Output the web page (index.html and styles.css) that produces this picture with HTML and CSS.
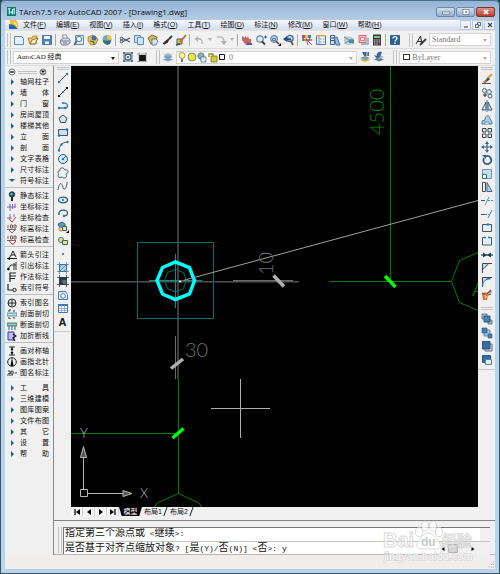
FILE: index.html
```html
<!DOCTYPE html>
<html lang="zh-CN">
<head>
    <meta charset="UTF-8">
    <meta name="viewport" content="width=device-width, initial-scale=1.0">
    <title>TArch7.5 For AutoCAD 2007 - [Drawing1.dwg]</title>
    <link rel="stylesheet" href="styles.css">
</head>
<body>

<div class="window">

    <header class="titlebar">
        <svg class="app-icon" viewBox="0 0 10 10"><rect width="10" height="10" fill="#0d7a78"/><path d="M1 2h3M2.500 2v6M6 8V3l2-1v6M4 5l2 2" stroke="#d8fff4" stroke-width="1.200" fill="none"/></svg>
        <h1>TArch7.5 For AutoCAD 2007 - [Drawing1.dwg]</h1>
        <div class="win-buttons">
            <button aria-label="最小化"><svg viewBox="0 0 12 8"><rect x="2.500" y="4" width="7" height="2" fill="#fff" stroke="#566" stroke-width=".6"/></svg></button>
            <button aria-label="还原"><svg viewBox="0 0 12 8"><rect x="3" y="1.500" width="6" height="5" fill="#fff" stroke="#566" stroke-width=".6"/><rect x="5" y="3.300" width="2" height="1.400" fill="#567"/></svg></button>
            <button class="close" aria-label="关闭"><svg viewBox="0 0 12 8"><path d="M4 2l4 4M8 2L4 6" stroke="#fff" stroke-width="1.700"/></svg></button>
        </div>
    </header>

    <nav class="menubar">
        <svg class="doc-icon" viewBox="0 0 10 10"><path d="M1 0h6l2 3v4H1z" fill="#f2c231"/><path d="M0 4l5 1 4 4H0z" fill="#2b67a8"/><path d="M5 2l3 4" stroke="#fff"/></svg>
        <button>文件(<u>F</u>)</button>
        <button>编辑(<u>E</u>)</button>
        <button>视图(<u>V</u>)</button>
        <button>插入(<u>I</u>)</button>
        <button>格式(<u>O</u>)</button>
        <button>工具(<u>T</u>)</button>
        <button>绘图(<u>D</u>)</button>
        <button>标注(<u>N</u>)</button>
        <button>修改(<u>M</u>)</button>
        <button>窗口(<u>W</u>)</button>
        <button>帮助(<u>H</u>)</button>
        <div class="doc-buttons">
            <button aria-label="最小化图形"><svg viewBox="0 0 10 8"><path d="M3 6h4" stroke="#333"/></svg></button>
            <button aria-label="还原图形"><svg viewBox="0 0 10 8"><path d="M4.500 3V1.500h3v3H6M2.500 3.500h3v3h-3z" stroke="#345" fill="none" stroke-width=".8"/></svg></button>
            <button aria-label="关闭图形"><svg viewBox="0 0 10 8"><path d="M3 2l4 4M7 2L3 6" stroke="#345" stroke-width="1.100"/></svg></button>
        </div>
    </nav>

    <!-- Standard + styles toolbars -->
    <div class="toolbar toolbar-top">
        <i class="grip"></i>
        <button aria-label="新建"><svg viewBox="0 0 12 12"><path d="M1.500 2.500h7l2 2v6h-9z" fill="#e3f2fb" stroke="#5d8fb5"/></svg></button>
        <button aria-label="打开"><svg viewBox="0 0 12 12"><path d="M1 4h4l1-2h4l-1 8H3z" fill="#f4cf57" stroke="#8a6d1c" stroke-width=".7"/><path d="M5 6l6-2-3 6H3z" fill="#fff3b8" stroke="#5d4a20" stroke-width=".7"/></svg></button>
        <button aria-label="保存"><svg viewBox="0 0 12 12"><path d="M1.500 1.500h9v9h-9z" fill="#4e81ba" stroke="#4577ad"/><path d="M3 2h6v3H3zM4 7.500h4V10H4z" fill="#eef5fb"/></svg></button>
        <i class="sep"></i>
        <button aria-label="打印"><svg viewBox="0 0 12 12"><path d="M3.500 1h4l1 4h-4z" fill="#fff" stroke="#678" stroke-width=".8"/><path d="M1.500 6l3-2h5l1.500 2v3l-3 2h-5L1.500 9z" fill="#d2dae4" stroke="#5b6b80" stroke-width=".8"/><path d="M2 7h8M4 9h4" stroke="#5b6b80" stroke-width=".8"/></svg></button>
        <button aria-label="打印预览"><svg viewBox="0 0 12 12"><path d="M2.500 1.500h8v9h-8z" fill="#d4e8f7" stroke="#5f8cb5"/><circle cx="6" cy="5" r="2.600" fill="#f5fbff" stroke="#5d7a94"/><path d="M4 7l-3 4" stroke="#49637c" stroke-width="1.500"/></svg></button>
        <button aria-label="发布"><svg viewBox="0 0 12 12"><path d="M1 3l5-2 5 4-2 5-5 1-3-4z" fill="#e7c046" stroke="#8a7740" stroke-width=".7"/><circle cx="7" cy="4" r="2.500" fill="#3f6fae"/><path d="M3 7l4 1v3" stroke="#37516c" fill="none"/></svg></button>
        <button aria-label="三维 DWF"><svg viewBox="0 0 12 12"><circle cx="6" cy="5.500" r="4.500" fill="#69a9cf"/><path d="M6 1c4 0 5 3 4 6L6 5z" fill="#e8c33c"/><path d="M2 6l4 1v4c-3-1-4-3-4-5z" fill="#357a3e"/><path d="M6 7l4-1-1 4-3 1z" fill="#3a5da0"/></svg></button>
        <i class="sep"></i>
        <button aria-label="剪切"><svg viewBox="0 0 12 12"><path d="M11 4L4 7.500M11 8L4 4.500" stroke="#3a4e6b" stroke-width="1.100"/><circle cx="2.600" cy="4.500" r="1.400" fill="none" stroke="#3a4e6b"/><circle cx="2.600" cy="7.500" r="1.400" fill="none" stroke="#3a4e6b"/></svg></button>
        <button aria-label="复制"><svg viewBox="0 0 12 12"><path d="M1.500 1.500h6v7h-6z" fill="#cbe1f4" stroke="#5c8cba"/><path d="M4.500 3.500h6v7h-6z" fill="#cfe5f5" stroke="#5c8cba"/></svg></button>
        <button aria-label="粘贴"><svg viewBox="0 0 12 12"><path d="M1 4l4-3 5 2-1 6-5 1z" fill="#d9b54a" stroke="#65532a" stroke-width=".8"/><path d="M5 5h4l2 2-2 4H5z" fill="#d4e4f2" stroke="#4d6e8e" stroke-width=".8"/></svg></button>
        <button aria-label="特性匹配"><svg viewBox="0 0 12 12"><path d="M11 2L6 7" stroke="#34465e" stroke-width="2"/><path d="M6 6L2 9.500l1.500.5L7 8z" fill="#3d2a1a" stroke="#3d2a1a"/></svg></button>
        <button aria-label="块编辑器"><svg viewBox="0 0 12 12"><path d="M2 5h5v5H2z" fill="#e8bf2a" stroke="#3b5d88"/><path d="M11 1L5 8" stroke="#c0652c" stroke-width="1.800"/><path d="M1 11l4-1" stroke="#27466e" stroke-width="1.500"/></svg></button>
        <i class="sep"></i>
        <button aria-label="放弃"><svg viewBox="0 0 12 12"><path d="M9 10C10 6 8 4 3 5" stroke="#b2b2b2" stroke-width="1.300" fill="none"/><path d="M5 2L1.500 5 5 8z" fill="#b2b2b2"/></svg></button>
        <button class="drop" aria-label="放弃列表"></button>
        <button aria-label="重做"><svg viewBox="0 0 12 12"><path d="M2 3c6-1 7 2 7 5" stroke="#b2b2b2" stroke-width="1.300" fill="none"/><path d="M5.500 7H12L9 11z" fill="#b2b2b2"/></svg></button>
        <button class="drop" aria-label="重做列表"></button>
        <i class="sep"></i>
        <button aria-label="实时平移"><svg viewBox="0 0 12 12"><path d="M1 2l3 2V2l2 2 1-2 1 3h2v4l-2 2H5L1 6z" fill="#c4636b"/><path d="M6 9h5v2H6z" fill="#31669c"/></svg></button>
        <button aria-label="实时缩放"><svg viewBox="0 0 12 12"><circle cx="5" cy="5" r="3.200" fill="#dcecf8" stroke="#5f86ab" stroke-width="1.200"/><path d="M7 7.500l3 3" stroke="#4d382a" stroke-width="1.800"/><path d="M9 3h3M10.500 1.500v3" stroke="#2c5d8c"/></svg></button>
        <button aria-label="窗口缩放"><svg viewBox="0 0 12 12"><circle cx="5" cy="5" r="3.300" fill="#bfd9ec" stroke="#5f86ab" stroke-width="1.200"/><path d="M3.500 4.500h3v2h-3z" fill="none" stroke="#375f86" stroke-width=".8"/><path d="M7 7.500l3 2.500" stroke="#4d382a" stroke-width="1.600"/><path d="M12 9v3H9z" fill="#111"/></svg></button>
        <button aria-label="缩放上一个"><svg viewBox="0 0 12 12"><circle cx="7" cy="4.500" r="3.200" fill="#bdd5e8" stroke="#456b90" stroke-width="1.200"/><path d="M8 7l2 4" stroke="#6d5733" stroke-width="1.700"/><path d="M0 5l4-3v2l4 .5v2L4 6v2z" fill="#274e7c"/></svg></button>
        <i class="sep"></i>
        <button aria-label="特性"><svg viewBox="0 0 12 12"><path d="M1 1h3v3H1z" fill="#c33c93"/><path d="M4 1h3v3H4z" fill="#e9cb2f"/><path d="M7 1h3v3H7z" fill="#3a7ec0"/><path d="M1 4h2v3H1z" fill="#4e9a4c"/><path d="M3 5h8v2H3z" fill="#d97a62"/><path d="M5 4l2 7M9 4l-2 3 4 4" stroke="#7b6674" fill="none"/></svg></button>
        <button aria-label="设计中心"><svg viewBox="0 0 12 12"><path d="M1.500 1.500h9v9h-9z" fill="#e9f1f9" stroke="#4c78ad"/><path d="M4 2v8M5 5h1.500M8 5h1.500M5 8h1.500M8 8h1.500" stroke="#6c96c4"/><path d="M1 1h10v1.500H1z" fill="#d8ad47"/></svg></button>
        <button aria-label="工具选项板"><svg viewBox="0 0 12 12"><path d="M1.500 1.500h4v9h-4z" fill="#d4e4f3" stroke="#3b689c"/><path d="M5 3h3l3 8H7z" fill="#9bbbdc" stroke="#2f5583" stroke-width=".8"/><path d="M2 4h3M2 6.500h3" stroke="#2f5583"/></svg></button>
        <button aria-label="图纸集"><svg viewBox="0 0 12 12"><path d="M1 2l8 1 2 4-3 4-7-1z" fill="#b5cbd7"/><path d="M1 3l5 3 5-1M2 9l4-2 5 3" stroke="#718ea2" fill="none"/><path d="M6 6h5v3H6z" fill="#4d8a9e"/></svg></button>
        <button aria-label="标记集"><svg viewBox="0 0 12 12"><path d="M2 1.500h7v7H2z" fill="#f7c9cf" stroke="#e0606f"/><path d="M3.500 3.500h4v3h-4z" fill="#fff" stroke="#e0606f" stroke-width=".8"/><path d="M4 10h7V4" stroke="#82a9cd" stroke-width="1.500" fill="none"/></svg></button>
        <button aria-label="计算器"><svg viewBox="0 0 12 12"><path d="M2 .5h8v11H2z" fill="#34383b"/><path d="M3 2h6v2H3z" fill="#7ec07e"/><path d="M3 6h1.500M5.300 6h1.500M7.600 6h1.500M3 8h1.500M5.300 8h1.500M7.600 8h1.500M3 10h1.500M5.300 10h1.500" stroke="#e5d6d6"/><path d="M7.600 9.500h1.500v1H7.600z" fill="#d44"/></svg></button>
        <i class="sep"></i>
        <button aria-label="帮助"><svg viewBox="0 0 12 12"><rect x="1" y="1" width="10" height="10" rx="1" fill="#2c6096"/><path d="M4 4.500C4 2 8 2 8 4.500 8 6 6 6 6 7.500M6 8.500V10" stroke="#fff" stroke-width="1.300" fill="none"/></svg></button>
        <i class="grip grip-new"></i>
        <button aria-label="文字样式"><svg viewBox="0 0 12 12"><path d="M1 10L5.500 2 7 10M2.500 7.500h5" stroke="#222" fill="none"/><path d="M11 5L6 10l-1 1" stroke="#34383b" stroke-width="1.800"/></svg></button>
        <label class="combo text-style off"><select aria-label="文字样式名" disabled><option>Standard</option></select></label>
    </div>

    <!-- Workspace, layer and properties toolbars -->
    <div class="toolbar toolbar-layers">
        <i class="grip"></i>
        <label class="combo workspace-name"><select aria-label="工作空间"><option>AutoCAD 经典</option></select></label>
        <button aria-label="工作空间设置"><svg viewBox="0 0 12 12"><path d="M1 1h10v10H1z" fill="#a9b7c4"/><circle cx="6" cy="6" r="3" fill="#e4e9ee" stroke="#4d6275" stroke-width="1.300"/><circle cx="6" cy="6" r="1" fill="#35485b"/><path d="M1 1h2v2H1zM9 1h2v2H9zM1 9h2v2H1zM9 9h2v2H9z" fill="#53718f"/></svg></button>
        <button aria-label="我的工作空间"><svg viewBox="0 0 12 12"><path d="M3 4h7v6H3z" fill="#161616"/><path d="M1.500 3h9M1.500 10.500h9M3 1.500v9M10 1.500v9" fill="none" stroke="#666" stroke-dasharray="1 1"/></svg></button>
        <i class="grip grip-new"></i>
        <button aria-label="图层特性管理器"><svg viewBox="0 0 12 12"><path d="M1 4l5-2 5 2-5 2z" fill="#a4bdd3"/><path d="M1 6l5-2 5 2-5 2z" fill="#7f9fbe"/><path d="M1 8.500l5-2 5 2-5 2z" fill="#7f9fbe"/></svg></button>
        <div class="combo layers off">
            <svg class="layer-state" viewBox="0 0 50 12">
                <circle cx="5" cy="4.500" r="3" fill="#fff4a0" stroke="#8c8436" stroke-width=".8"/><path d="M4 8h2v3H4z" fill="#777"/>
                <circle cx="15" cy="6" r="4" fill="#f8e32e" stroke="#5d92a5"/>
                <circle cx="24" cy="5" r="3.200" fill="#8eafb8" stroke="#537783" stroke-width=".8"/><path d="M24 6h5v5h-5z" fill="#e5edf0" stroke="#537783" stroke-width=".8"/>
                <path d="M32 6V3h4v4" stroke="#918b20" stroke-width="1.300" fill="none"/><path d="M34 5h6v6h-6z" fill="#d3cc39" stroke="#7d7718" stroke-width=".8"/>
                <path d="M42.500 3.500h5v5h-5z" fill="#fff" stroke="#111"/>
            </svg>
            <select aria-label="图层" disabled><option>0</option></select>
        </div>
        <button aria-label="置为当前图层"><svg viewBox="0 0 12 12"><path d="M1 9l5-2 5 2-5 2z" fill="#d9b939"/><path d="M1 7l5-2 5 2-5 2z" fill="#6f98c0"/><path d="M3 1h7v4H5z" fill="#3e6d9d"/><path d="M8 1v5" stroke="#e8d16a"/></svg></button>
        <button aria-label="上一个图层"><svg viewBox="0 0 12 12"><path d="M1 8.500l5-2 5 2-5 2z" fill="#5b7fa4"/><path d="M2 6l5-2 4 2-5 2z" fill="#9cb5cd"/><path d="M9 1C5 0 3 3 4 5l-3-1 3 4 3-2" fill="#3f668c"/></svg></button>
        <i class="grip grip-new"></i>
        <label class="combo color off"><span class="swatch"></span><select aria-label="颜色" disabled><option>ByLayer</option></select></label>
    </div>

    <main class="workspace">

        <aside class="palette">
            <div class="palette-head">
                <button aria-label="折叠"><svg viewBox="0 0 8 8"><circle cx="4" cy="4" r="3" fill="none" stroke="#555" stroke-width=".8"/><path d="M2 4h4" stroke="#111" stroke-width="1.300"/></svg></button>
                <i class="hgrip"></i>
                <button aria-label="关闭菜单"><svg viewBox="0 0 8 8"><circle cx="4" cy="4" r="3" fill="none" stroke="#555" stroke-width=".8"/><path d="M2.500 2.500l3 3M5.500 2.500l-3 3" stroke="#111" stroke-width="1.200"/></svg></button>
            </div>
            <div class="group">
                <button class="branch"><span>轴网柱子</span></button>
                <button class="branch"><span>墙 体</span></button>
                <button class="branch"><span>门 窗</span></button>
                <button class="branch"><span>房间屋顶</span></button>
                <button class="branch"><span>楼梯其他</span></button>
                <button class="branch"><span>立 面</span></button>
                <button class="branch"><span>剖 面</span></button>
                <button class="branch"><span>文字表格</span></button>
                <button class="branch"><span>尺寸标注</span></button>
                <button class="branch open"><span>符号标注</span></button>
            </div>
            <div class="group">
                <button><svg viewBox="0 0 10 10"><circle cx="5" cy="3.500" r="2.700" fill="#285f70" stroke="#162f38"/><path d="M4 6h2v4H4z" fill="#282828"/><circle cx="4.500" cy="3" r="1" fill="#7ed2b2"/></svg><span>静态标注</span></button>
                <button><svg viewBox="0 0 10 10"><path d="M0 5h9M3 2v7M5.500 2v5M8 1.500v4" stroke="#8067a8" fill="none"/></svg><span>坐标标注</span></button>
                <button><svg viewBox="0 0 10 10"><path d="M0 5h5M3 1v5M7 1v3" stroke="#8067a8"/><path d="M2 6l3 3 4-5" stroke="#d23c35" fill="none"/></svg><span>坐标检查</span></button>
                <button><svg viewBox="0 0 10 10"><path d="M1 1v3M3.500 1h2v3h-2zM7 1h2v3H7zM0 5.500h9M2 6l3 3 3-3" stroke="#6a5050" fill="none" stroke-width=".9"/></svg><span>标高标注</span></button>
                <button><svg viewBox="0 0 10 10"><path d="M1 1v3M3.500 1h2v3h-2zM7 1h2v3H7zM0 5.500h9M2 6l3 3" stroke="#6a5050" fill="none" stroke-width=".9"/><path d="M4 8l2 1.500L9 6" stroke="#d22" fill="none"/></svg><span>标高检查</span></button>
            </div>
            <div class="group">
                <button><svg viewBox="0 0 10 10"><path d="M3 7l3-6 3 6M4 5h4M0 8.500h10" stroke="#222" fill="none"/><path d="M0 8.500L3 7v3z"/></svg><span>箭头引注</span></button>
                <button><svg viewBox="0 0 10 10"><path d="M0 9l4-5h5M7 2v7M9 1v8" stroke="#333" fill="none"/><circle cx="1.500" cy="8" r="1.200"/></svg><span>引出标注</span></button>
                <button><svg viewBox="0 0 10 10"><path d="M3 10V1h6M3 4h6M3 6.500h5" stroke="#222" fill="none" stroke-width="1.200"/></svg><span>作法标注</span></button>
                <button><svg viewBox="0 0 10 10"><path d="M1 1v6h5" stroke="#222" fill="none" stroke-width="1.200"/><circle cx="7.500" cy="7" r="1.700" fill="none" stroke="#222"/></svg><span>索引符号</span></button>
            </div>
            <div class="group">
                <button><svg viewBox="0 0 10 10"><circle cx="5" cy="5" r="4" fill="none" stroke="#222"/><path d="M1 5h8M5 2v6" stroke="#222"/></svg><span>索引图名</span></button>
                <button><svg viewBox="0 0 10 10"><path d="M0 4h10v3H0z" fill="#b9e2e4" stroke="#477f85" stroke-width=".8"/><path d="M4 1H2v2M4 10H2V8M7 1v2M7 8v2" stroke="#333" fill="none"/></svg><span>剖面剖切</span></button>
                <button><svg viewBox="0 0 10 10"><path d="M0 3h10v3H0z" fill="#8fc5b8" stroke="#39695f" stroke-width=".8"/><path d="M2 6v4M5 6v4M8 6v4" stroke="#39695f"/></svg><span>断面剖切</span></button>
                <button><svg viewBox="0 0 10 10"><path d="M1 1h6v8H1z" fill="#bcc0f2" stroke="#3735a5"/><path d="M6 3l3 2-3 2 2 3" stroke="#222" fill="none" stroke-width="1.300"/></svg><span>加折断线</span></button>
            </div>
            <div class="group">
                <button><svg viewBox="0 0 10 10"><path d="M2 1h6M2 9h6M5 1v8" stroke="#222"/><path d="M3.500 4L5 1.500 6.500 4zM3.500 6L5 8.500 6.500 6z"/></svg><span>画对称轴</span></button>
                <button><svg viewBox="0 0 10 10"><circle cx="5" cy="5" r="4.300" fill="none" stroke="#222"/><path d="M5 0l1.500 9h-3z"/></svg><span>画指北针</span></button>
                <button><svg viewBox="0 0 10 10"><path d="M0 7h6M1 3h2v3M4 3h2v3H4zM1 5l2 1M7.500 5H10" stroke="#444" fill="none"/></svg><span>图名标注</span></button>
            </div>
            <div class="group plain">
                <button class="branch"><span>工 具</span></button>
                <button class="branch"><span>三维建模</span></button>
                <button class="branch"><span>图库图案</span></button>
                <button class="branch"><span>文件布图</span></button>
                <button class="branch"><span>其 它</span></button>
                <button class="branch"><span>设 置</span></button>
                <button class="branch"><span>帮 助</span></button>
            </div>
        </aside>

        <section class="desk">
            <div class="drawing-row">

                <div class="side-tools draw-tools">
                    <i class="hgrip"></i>
                    <div class="tool-column">
                        <button aria-label="直线"><svg viewBox="0 0 12 12"><path d="M2 10l8-8" stroke="#456"/><circle cx="2" cy="10" r="1.200" fill="#277bc0"/><circle cx="10" cy="2" r="1.200" fill="#277bc0"/></svg></button>
                        <button aria-label="构造线"><svg viewBox="0 0 12 12"><path d="M1 11L11 1" stroke="#333"/><path d="M8.500 1H11v2.500zM1 8.500V11h2.500z"/><circle cx="6" cy="6" r="1" fill="#277bc0"/></svg></button>
                        <button aria-label="多段线"><svg viewBox="0 0 12 12"><path d="M1 9h8c3-2 1-5-2-5" stroke="#4a7eae" fill="none" stroke-width="1.300"/><circle cx="2" cy="9" r="1.200" fill="#1879c4"/><circle cx="8" cy="9" r="1.200" fill="#1879c4"/><circle cx="6" cy="4" r="1.100" fill="#1879c4"/></svg></button>
                        <button aria-label="正多边形"><svg viewBox="0 0 12 12"><path d="M6 2l4 3.200-1.700 4.300H3.700L2 5.200z" fill="#d4e4e9" stroke="#394e5d"/></svg></button>
                        <button aria-label="矩形"><svg viewBox="0 0 12 12"><path d="M1.500 3.500h9v6h-9z" fill="#c9e1ef" stroke="#405666"/><circle cx="10" cy="3.500" r="1.300" fill="#1879c4"/><circle cx="2" cy="9.500" r="1.300" fill="#1879c4"/></svg></button>
                        <button aria-label="圆弧"><svg viewBox="0 0 12 12"><path d="M2 11C2 6 5 2 11 2" stroke="#456" fill="none"/><circle cx="2" cy="10.500" r="1.200" fill="#1879c4"/><circle cx="4.500" cy="4.500" r="1.200" fill="#1879c4"/><circle cx="10.500" cy="2" r="1.200" fill="#1879c4"/></svg></button>
                        <button aria-label="圆"><svg viewBox="0 0 12 12"><circle cx="6" cy="6" r="4.500" fill="#d4eaf7" stroke="#2f5877"/><path d="M6 6l3-3" stroke="#1879c4"/><circle cx="6" cy="6" r="1.200" fill="#1879c4"/></svg></button>
                        <button aria-label="修订云线"><svg viewBox="0 0 12 12"><path d="M3 4c-1-4 4-4 5-1 4-1 4 3 1 4 2 4-2 5-4 3-4 2-5-2-3-3-2-1-1-4 1-3z" fill="#e8f0f3" stroke="#506371"/></svg></button>
                        <button aria-label="样条曲线"><svg viewBox="0 0 12 12"><path d="M1 10c2-12 5-4 5-2 1 3 4 0 4-6" fill="none" stroke="#4a5861"/></svg></button>
                        <button aria-label="椭圆"><svg viewBox="0 0 12 12"><ellipse cx="6" cy="6" rx="4.500" ry="2.800" fill="#d7ecf6" stroke="#315b7a" stroke-width="1.300"/><circle cx="6" cy="6" r="1.100" fill="#1879c4"/></svg></button>
                        <button aria-label="椭圆弧"><svg viewBox="0 0 12 12"><path d="M2 7C1 2 11 2 10.500 6c0 2-2 3-4 3" fill="none" stroke="#3b5c76" stroke-width="1.200"/><circle cx="2" cy="7" r="1.100" fill="#1879c4"/><circle cx="7" cy="9" r="1.200" fill="#1879c4"/></svg></button>
                        <button aria-label="插入块"><svg viewBox="0 0 12 12"><path d="M1 3l4-2 3 2v4H3z" fill="#5f98c6" stroke="#2e5f88"/><circle cx="4" cy="8" r="2" fill="#f4e476" stroke="#6e7240" stroke-width=".8"/><path d="M5.500 5.500h4v4h-4z" fill="#f6eb8c" stroke="#315f83"/><path d="M12 9v3H9z"/></svg></button>
                        <button aria-label="创建块"><svg viewBox="0 0 12 12"><circle cx="4" cy="5" r="2.500" fill="#f0e271" stroke="#43738f"/><path d="M5.500 5.500h5v4h-5z" fill="#f0e271" stroke="#33648d"/></svg></button>
                        <button aria-label="点"><svg viewBox="0 0 12 12"><circle cx="6" cy="6" r="1.100" fill="#1879c4"/></svg></button>
                        <button aria-label="图案填充"><svg viewBox="0 0 12 12"><path d="M2.500 2.500h7v7h-7z" fill="#a9d1eb" stroke="#376486"/><path d="M2 6l4-4M3 9l6-6M6 10l4-4M2.500 0v12M9.500 0v12M0 9.500h12M0 2.500h12" stroke="#47799d" stroke-width=".7"/></svg></button>
                        <button aria-label="渐变色"><svg viewBox="0 0 12 12"><path d="M2 2h8v8H2z" fill="#28394b"/><path d="M5 5h5v4H6z" fill="#667261"/><path d="M2.500 0v12M9.500 0v12M0 9.500h12M0 2.500h12" stroke="#2b3d50" stroke-width=".8"/></svg></button>
                        <button aria-label="面域"><svg viewBox="0 0 12 12"><path d="M1.500 2.500h7l2 3v5h-9z" fill="#d5e8f5" stroke="#517fa9"/><circle cx="6" cy="7" r="2.300" fill="#fff" stroke="#517fa9"/></svg></button>
                        <button aria-label="表格"><svg viewBox="0 0 12 12"><path d="M1.500 2.500h9v8h-9z" fill="#fff" stroke="#4474aa"/><path d="M1 2h10v2H1z" fill="#4474aa"/><path d="M2 6.500h8M2 8.500h8M4.500 3v7M7.500 3v7" stroke="#79a3cb" stroke-width=".8"/></svg></button>
                        <button class="mtext" aria-label="多行文字">A</button>
                    </div>
                </div>

                <div class="sheet">
                    <svg class="canvas" viewBox="71 66 407 441" preserveAspectRatio="xMinYMin slice">
                        <!-- axis lines -->
                        <g fill="none" stroke="#505050" stroke-width="1.500">
                            <path d="M178 66V379"/>
                            <path d="M71 281.700H299"/>
                        </g>
                        <g fill="none" stroke="#007c00">
                            <path d="M390.500 66V281"/>
                            <path d="M329 281.500H451.500"/>
                            <path d="M478 252.500L459.500 260.500 451.500 281.500 459.500 302.500 478 310.500"/>
                            <path d="M71 433.500H178M178.500 379V493.500"/>
                            <path d="M154 508L157 503 178.500 493.500 199 503 202 508"/>
                        </g>
                        <!-- column block -->
                        <g fill="none" stroke="#007070">
                            <path d="M137.500 242.500H213.500V318.500H137.500z"/>
                            <path d="M175.500 254V308M149 280.500H202" stroke="#009090"/>
                            <path d="M175.500 269.500L183.500 272.500 186.500 280.500 183.500 288.500 175.500 292 167.500 288.500 164.500 280.500 167.500 272.500z"/>
                        </g>
                        <path d="M175.500 262L189.500 267.500 194.500 280.500 189.500 294 175.500 299.500 162.500 294 157 280.500 162.500 267.500z" fill="none" stroke="#00ffff" stroke-width="3.500"/>
                        <path d="M183 280.500L478 200.500" stroke="#a0a0a0"/>
                        <path d="M179 281.500h2.500" stroke="#fff" stroke-width="1.500"/>
                        <path d="M181.500 281h2" stroke="#b02020" stroke-width="1.500"/>
                        <!-- dimension lines and ticks -->
                        <g stroke="#6c6c6c">
                            <path d="M233 280.500H293"/>
                            <path d="M175.500 336V379"/>
                        </g>
                        <g stroke="#b0b0b0" stroke-width="3.500">
                            <path d="M273.500 275.500L284 286.500"/>
                            <path d="M171 368.500L183 359"/>
                        </g>
                        <g stroke="#00ff00" stroke-width="3.500">
                            <path d="M385 276L395.500 287"/>
                            <path d="M172.500 438L183.500 428.500"/>
                        </g>
                        <text class="dim green" transform="translate(384 135) rotate(-90)">4500</text>
                        <text class="dim" transform="translate(273 275) rotate(-90)">10</text>
                        <text class="dim" x="185" y="357">30</text>
                        <text class="dim green" x="472" y="296">A</text>
                        <!-- UCS icon -->
                        <g fill="none" stroke="#b8b8b8">
                            <path d="M80.500 489.500h7v7h-7zM83.500 489.500V457M88 493.500H123"/>
                            <path d="M83.500 446.500L80.500 457.500H86.500zM132 493.500L123 490.500V496.500z" fill="#555"/>
                        </g>
                        <text class="axis" x="80" y="438">Y</text>
                        <text class="axis" x="140" y="498">X</text>
                        <path d="M211 408.500H270M240.500 379V438" stroke="#b0b0b0"/>
                    </svg>
                    <div class="layout-tabs">
                        <button class="step" aria-label="第一个"><svg viewBox="0 0 10 8"><path d="M3 1v6" stroke="#000" stroke-width="1.300"/><path d="M8 1v6L4 4z"/></svg></button>
                        <button class="step" aria-label="上一个"><svg viewBox="0 0 10 8"><path d="M7 1v6L3 4z"/></svg></button>
                        <button class="step" aria-label="下一个"><svg viewBox="0 0 10 8"><path d="M3 1v6l4-3z"/></svg></button>
                        <button class="step" aria-label="最后一个"><svg viewBox="0 0 10 8"><path d="M2 1v6l4-3z"/><path d="M7 1v6" stroke="#000" stroke-width="1.300"/></svg></button>
                        <button class="tab active">模型</button>
                        <button class="tab">布局1</button>
                        <button class="tab">布局2</button>
                    </div>
                </div>

                <div class="side-tools modify-tools">
                    <i class="hgrip"></i>
                    <div class="tool-column">
                        <button aria-label="删除"><svg viewBox="0 0 12 12"><path d="M11 1L6 6" stroke="#d9a33e" stroke-width="2.200"/><path d="M7 4.500L4 8l1.500 1L9 6z" fill="#346"/><path d="M5 6.500L2 9l2 1.500L6 8z" fill="#d45a50"/><path d="M1 10.500h9" stroke="#555"/></svg></button>
                        <button aria-label="复制对象"><svg viewBox="0 0 12 12"><g fill="#e6f0f7" stroke="#49657e"><circle cx="3.500" cy="3.500" r="2"/><circle cx="8" cy="5" r="2.300"/><circle cx="9" cy="9" r="2"/><circle cx="4" cy="8" r="1.200" stroke="#222"/></g></svg></button>
                        <button aria-label="镜像"><svg viewBox="0 0 12 12"><path d="M5 2v8H1zM7 2v8h4z" fill="#dce8f0" stroke="#3d5163"/><path d="M6 0v12" stroke="#2a7abc"/></svg></button>
                        <button aria-label="偏移"><svg viewBox="0 0 12 12"><path d="M1 10V7l3-1c0-6 5-5 5-1l2 3v2z" fill="#acd2eb" stroke="#48799e"/><path d="M4 10V8h4v2" fill="#e7f4fa" stroke="#48799e" stroke-width=".8"/></svg></button>
                        <button aria-label="阵列"><svg viewBox="0 0 12 12"><path d="M1.500 1.500h3.500v3.500H1.500zM7 1.500h3.500v3.500H7zM1.500 7h3.500v3.500H1.500zM7 7h3.500v3.500H7z" fill="#e9eff3" stroke="#36434f"/></svg></button>
                        <button aria-label="移动"><svg viewBox="0 0 12 12"><path d="M6 2v8M2 6h8" stroke="#336797" stroke-width="1.200"/><path d="M6 0l2 3H4zM6 12l2-3H4zM0 6l3-2v4zM12 6L9 4v4z" fill="#336797"/></svg></button>
                        <button aria-label="旋转"><svg viewBox="0 0 12 12"><path d="M4 2.500C9 0 12 6 9 9c-4 3-8-1-6-5" fill="none" stroke="#315f8c" stroke-width="1.800"/><path d="M1 1h4v4z" fill="#315f8c"/></svg></button>
                        <button aria-label="缩放"><svg viewBox="0 0 12 12"><path d="M1.500 1.500h9v9h-9z" fill="#c4dff0" stroke="#6d93af"/><path d="M1.500 6.500h4v4h-4z" fill="#fff" stroke="#46657e"/></svg></button>
                        <button aria-label="拉伸"><svg viewBox="0 0 12 12"><path d="M1.500 1.500h3v9h-3z" fill="#e9f0f4" stroke="#404d58"/><path d="M6 1.500l5 9H6z" fill="#b2d8ef" stroke="#47627a"/></svg></button>
                        <button aria-label="修剪"><svg viewBox="0 0 12 12"><path d="M0 5.500h4" stroke="#456"/><path d="M4 10L8 2" stroke="#4b92cd"/><path d="M7 5.500h5" stroke="#4b92cd" stroke-dasharray="2 1"/></svg></button>
                        <button aria-label="延伸"><svg viewBox="0 0 12 12"><path d="M0 6.500h4" stroke="#456"/><path d="M4 6.500h4" stroke="#4b92cd" stroke-dasharray="2 1"/><path d="M7 10l4-8" stroke="#3e85c1"/></svg></button>
                        <button aria-label="打断于点"><svg viewBox="0 0 12 12"><path d="M1.500 2.500h9v7h-9z" fill="#e1eef4" stroke="#455867"/><circle cx="7" cy="2.500" r="1.200" fill="#1879c4"/></svg></button>
                        <button aria-label="打断"><svg viewBox="0 0 12 12"><path d="M4 2.500H1.500v7.500h9V2.500H8" fill="#e1eef4" stroke="#455867"/><circle cx="4" cy="2.500" r="1" fill="#1879c4"/><circle cx="8" cy="2.500" r="1" fill="#1879c4"/></svg></button>
                        <button aria-label="合并"><svg viewBox="0 0 12 12"><path d="M0 6h12" stroke="#265175" stroke-width="1.300"/><path d="M2 3.500L6 6 2 8.500zM10 3.500L6 6l4 2.500z" fill="#203b51"/></svg></button>
                        <button aria-label="倒角"><svg viewBox="0 0 12 12"><path d="M1.500 11V1.500H11" stroke="#444" fill="none"/><path d="M2 7L7 2" stroke="#3e88c6" stroke-width="1.300"/><path d="M2 2h4L2 6z" fill="#c4dceb"/></svg></button>
                        <button aria-label="圆角"><svg viewBox="0 0 12 12"><path d="M1.500 11V1.500H11" stroke="#444" fill="none"/><path d="M1.500 10c0-5 3-7.500 8-7.500" stroke="#2d75b2" stroke-width="1.300" fill="none"/><path d="M2 2h4L2 6z" fill="#c4dceb"/></svg></button>
                        <button aria-label="分解"><svg viewBox="0 0 12 12"><path d="M1 5l4-2 2 3-1 5H2z" fill="#df7040"/><path d="M3 6l3 1-1 3z" fill="#f2d44d"/><path d="M6 5l4-4M7 6l3-1M1 4l3 1" stroke="#5b4932" stroke-width="1.300"/><circle cx="9.500" cy="3" r="1.200" fill="#d36868"/></svg></button>
                    </div>
                    <i class="hgrip second"></i>
                    <div class="tool-column order-tools">
                        <button aria-label="前置"><svg viewBox="0 0 12 12"><path d="M1 1h5v5H1zM7 7h4v4H7z" fill="#a6bfd3" stroke="#678"/><path d="M3 3h6v6H3z" fill="#4b7fb3" stroke="#345c82"/></svg></button>
                        <button aria-label="后置"><svg viewBox="0 0 12 12"><path d="M3 3h6v6H3z" fill="#a6c7e1" stroke="#6b8fae"/><path d="M1 1h5v5H1zM7 7h4v4H7z" fill="#4b7fb3" stroke="#345c82" stroke-width=".7"/></svg></button>
                        <button aria-label="置于对象之上"><svg viewBox="0 0 12 12"><path d="M4 4h7v7H4z" fill="#d5e1ea" stroke="#667"/><path d="M1.500 1.500h7.500v7.500h-7.500z" fill="#336ea6" stroke="#2e567b"/></svg></button>
                        <button aria-label="置于对象之下"><svg viewBox="0 0 12 12"><path d="M1.500 1.500h8v7h-8z" fill="#336ea6" stroke="#2e567b"/><path d="M4.500 5.500h6v5h-6z" fill="#e2eef6" stroke="#5b7f9e"/></svg></button>
                    </div>
                </div>
            </div>

            <div class="command">
                <i class="grip"></i>
                <div class="console">
                    <div class="history">
                        <p><b>指定第三个源点或</b> &lt;<b>继续</b>&gt;:</p>
                        <div class="vscroll">
                            <button aria-label="向上滚动"><svg viewBox="0 0 8 6"><path d="M4 1.500L6 4.500H2z"/></svg></button>
                            <button aria-label="向下滚动"><svg viewBox="0 0 8 6"><path d="M4 4.500L2 1.500h4z"/></svg></button>
                        </div>
                    </div>
                    <div class="prompt">
                        <label for="cmd"><b>是否基于对齐点缩放对象</b>? [<b>是</b>(Y)/<b>否</b>(N)] &lt;<b>否</b>&gt;:</label>
                        <input id="cmd" type="text" value="y">
                        <div class="hscroll">
                            <button aria-label="向左滚动"><svg viewBox="0 0 6 8"><path d="M4.500 2v4L1.500 4z"/></svg></button>
                            <i class="thumb"></i>
                            <button aria-label="向右滚动"><svg viewBox="0 0 6 8"><path d="M1.500 2v4L4.500 4z"/></svg></button>
                        </div>
                    </div>
                </div>
                <svg class="watermark" viewBox="0 0 92 44">
                    <g class="mark">
                        <ellipse cx="36" cy="12" rx="3.500" ry="4.500"/><ellipse cx="42" cy="6" rx="3.500" ry="5"/><ellipse cx="50" cy="6" rx="3.500" ry="5"/><ellipse cx="56" cy="12" rx="3.500" ry="4.500"/>
                        <path d="M36 20c3-4 5-7 9-7s7 3 10 7c5 7 1 10-3 9H39c-5 0-7-4-3-9z"/>
                        <text class="brand" x="0" y="27">Bai</text>
                        <text class="brand cjk" x="59" y="26">经验</text>
                    </g>
                    <text class="du" x="38" y="26">du</text>
                    <text class="url" x="1" y="40">jingyan.baidu.com</text>
                </svg>
            </div>
        </section>
    </main>

    <footer class="statusbar">
        <svg viewBox="0 0 8 8"><path d="M6 1h1M4 3.500h1M6 3.500h1M1.500 6h1M4 6h1M6 6h1" stroke="#aaa" stroke-width="1.200"/></svg>
    </footer>
</div>

</body>
</html>
```
FILE: styles.css
```css
* {
    box-sizing: border-box;
}
body {
    margin: 0;
    background-color: #0d5560;
    color: #111;
    font-family: "Liberation Sans", "Noto Sans CJK SC", sans-serif;
    font-size: 7px;
}
button {
    display: flex;
    align-items: center;
    justify-content: center;
    margin: 0;
    padding: 0;
    border: none;
    background: none;
    color: inherit;
    font: inherit;
    white-space: nowrap;
}
svg {
    display: block;
    flex: none;
}
.window {
    display: flex;
    flex-direction: column;
    height: 100vh;
    padding: 0 4px 4px;
    border: 1px solid #33555f;
    border-top: none;
    border-radius: 5px 5px 0 0;
    background-color: #b9d3ec;
}

/* Title bar */
.titlebar {
    display: flex;
    align-items: center;
    height: 20px;
    margin: 0 -4px;
    padding: 2px 4px 0 2px;
    border-top: 1px solid #4d6f8f;
    border-radius: 5px 5px 0 0;
    background: linear-gradient(#94b3d3, #b5cce5);
}
.app-icon {
    width: 9px;
    height: 9px;
    margin-left: 4px;
}
.titlebar h1 {
    flex: 1;
    margin: 0 0 0 3px;
    font: 8px/10px "Open Sans", sans-serif;
}
.win-buttons {
    display: flex;
    gap: 1px;
}
.win-buttons button {
    width: 19px;
    height: 10px;
    border: 1px solid #6c88a6;
    border-radius: 2px;
    background: linear-gradient(#cfdeee, #94b0cd);
}
.win-buttons .close {
    border-color: #7c332e;
    background: linear-gradient(#dc9489, #b8402f);
}
.win-buttons svg {
    width: 12px;
    height: 8px;
}

/* Menu */
.menubar {
    display: flex;
    align-items: center;
    gap: 10px;
    height: 10px;
    padding-left: 4px;
    background: linear-gradient(#f7f9fd, #d3dcee);
    line-height: 10px;
}
.doc-icon {
    width: 10px;
    height: 10px;
    margin-right: -6px;
}
.doc-buttons {
    display: flex;
    gap: 1px;
    margin-left: auto;
}
.doc-buttons button {
    width: 11px;
    height: 10px;
    border: 1px solid #b9c7da;
    background-color: #edf2f9;
}
.doc-buttons svg {
    width: 10px;
    height: 8px;
}

/* Toolbars */
.toolbar {
    display: flex;
    align-items: center;
    gap: 2px;
    padding: 0 4px 0 2px;
    background-color: #f1f1f1;
    border-bottom: 1px solid #dcdcdc;
}
.toolbar-top {
    height: 19px;
    border-top: 1px solid #e2e2e2;
}
.toolbar-layers {
    height: 17px;
}
.toolbar button,
.toolbar button svg,
.tool-column button,
.tool-column svg {
    width: 12px;
    height: 12px;
}
.toolbar .sep {
    width: 2px;
    height: 12px;
    border-left: 1px solid #aaa;
}
.grip {
    width: 4px;
    height: 14px;
    border: solid #c2c2c2;
    border-width: 0 1px;
}
.grip-new {
    margin-left: 6px;
}
.toolbar .drop {
    width: 6px;
}
.drop::after,
.combo::after {
    content: "";
    border: 2px solid transparent;
    border-top: 3px solid #b2b2b2;
    border-bottom: none;
}
.combo {
    position: relative;
    display: flex;
    align-items: center;
    height: 13px;
    border: 1px solid #d2d2d2;
    background-color: #fff;
}
.combo::after {
    position: absolute;
    right: 3px;
    top: 5px;
    border-top-color: #111;
}
.combo.off::after {
    border-top-color: #aaa;
}
.combo select {
    width: 100%;
    height: 11px;
    padding: 0 3px;
    border: none;
    background: none;
    color: #111;
    font: 7px/11px "Liberation Serif", "Noto Sans CJK SC", serif;
    appearance: none;
}
.combo.off select {
    padding: 0 2px;
    color: #777;
    font-size: 8px;
    opacity: 1;
}
.text-style {
    flex: 1;
}
.workspace-name {
    width: 106px;
    margin-right: 1px;
}
.layers {
    flex: 2;
}
.layer-state {
    width: 50px;
    height: 12px;
}
.color {
    flex: 1;
}
.swatch {
    width: 7px;
    height: 6px;
    margin-left: 3px;
    flex: none;
    border: 1px solid #333;
}

/* Workspace */
.workspace {
    display: flex;
    flex: 1;
    min-height: 0;
    background-color: #f0f0f0;
}
.palette {
    width: 49px;
    border-right: 1px solid #8b8b8b;
}
.palette-head {
    display: flex;
    align-items: center;
    gap: 2px;
    height: 10px;
    padding: 2px 6px 0 3px;
}
.palette-head svg {
    width: 8px;
    height: 8px;
}
.hgrip {
    flex: 1;
    height: 3px;
    border: solid #c2c2c2;
    border-width: 1px 0;
}
.group button {
    width: 100%;
    height: 11px;
    padding-left: 2px;
    justify-content: flex-start;
    gap: 3px;
    line-height: 11px;
}
.group button span {
    width: 29px;
    text-align: justify;
    text-align-last: justify;
}
.group svg {
    width: 10px;
    height: 10px;
}
.group + .group {
    margin-top: 1px;
    padding-top: 2px;
    border-top: 1px solid #bdbdbd;
}
.group + .plain {
    border-top-color: #f8f8f8;
}
.branch::before {
    content: "";
    margin: 0 3px 0 4px;
    border: 3px solid transparent;
    border-left: 3px solid #205f9b;
    border-right: none;
}
.branch.open::before {
    margin: 0 2px;
    border: 3px solid transparent;
    border-top: 3px solid #205f9b;
    border-bottom: none;
}

.desk {
    display: flex;
    flex: 1;
    flex-direction: column;
    min-width: 0;
}
.drawing-row {
    display: flex;
    flex: 1;
    min-height: 0;
}
.side-tools {
    display: flex;
    flex-direction: column;
    align-items: center;
    align-self: flex-start;
    width: 17px;
    padding: 1px 2px 3px;
    border: solid #c9c9c9;
    border-width: 0 0 1px;
}
.side-tools .hgrip {
    flex: none;
    width: 12px;
}
.tool-column {
    display: flex;
    flex-direction: column;
    justify-content: space-between;
}
.draw-tools .tool-column {
    height: 256px;
    margin-top: 2px;
}
.modify-tools .tool-column {
    height: 228px;
    margin-top: 3px;
}
.modify-tools .order-tools {
    height: 53px;
}
.side-tools .second {
    margin-top: 6px;
}
.mtext {
    font: bold 11px/12px "Liberation Sans", sans-serif;
}
.sheet {
    display: flex;
    flex: 1;
    flex-direction: column;
    min-width: 0;
}
.canvas {
    flex: 1;
    width: 100%;
    min-height: 0;
    background-color: #000;
}
.dim {
    fill: #707070;
    font: 300 20px "Lato", sans-serif;
}
.green {
    fill: #008400;
}
.axis {
    fill: #b8b8b8;
    font: 300 13px "Lato", sans-serif;
}
.layout-tabs {
    display: flex;
    height: 13px;
    padding-bottom: 4px;
}
.step {
    width: 12px;
    border-right: 1px solid #d0d0d0;
    background-color: #f6f6f6;
}
.step svg {
    width: 10px;
    height: 8px;
}
.tab {
    position: relative;
    width: 26px;
    padding-right: 4px;
    line-height: 9px;
}
.tab.active {
    width: 23px;
    padding: 0;
    background-color: #000;
    color: #fff;
    clip-path: polygon(0 0, 100% 0, 88% 100%, 12% 100%);
}
.tab:not(.active)::after {
    content: "";
    position: absolute;
    top: 0;
    right: 2px;
    height: 9px;
    border-right: 1px solid #222;
    transform: skewX(-20deg);
}

/* Command line */
.command {
    position: relative;
    display: flex;
    gap: 1px;
    height: 35px;
    padding: 6px 5px 0 4px;
    border-top: 1px solid #858585;
    border-bottom: 1px solid #b5b5b5;
}
.command .grip {
    height: 26px;
}
.console {
    flex: 1;
    min-width: 0;
    border: solid #777;
    border-width: 1px 0 0 1px;
    background-color: #fff;
    font: 8px/13px "Liberation Mono", "Noto Sans CJK SC", monospace;
}
.console b {
    font-size: 10px;
    font-weight: normal;
}
.history,
.prompt {
    display: flex;
    height: 13px;
    overflow: hidden;
    white-space: pre;
}
.history {
    height: 14px;
    border-bottom: 1px solid #c4c4c4;
}
.history p {
    flex: 1;
    margin: -1px 0 0 1px;
}
.vscroll {
    width: 10px;
    background-color: #f0f0f0;
}
.vscroll svg {
    width: 9px;
    height: 6px;
}
.prompt label {
    margin-left: 1px;
}
.prompt input {
    flex: 1;
    min-width: 0;
    padding: 0 0 0 5px;
    border: none;
    outline: none;
    background: none;
    font: inherit;
}
.hscroll {
    display: flex;
    align-items: center;
    width: 50px;
    padding: 0 14px 0 0;
    background-color: #f0f0f0;
}
.hscroll svg {
    width: 6px;
    height: 8px;
}
.thumb {
    width: 10px;
    height: 9px;
    margin: 0 auto 0 2px;
    border: 1px solid #b5b5b5;
    border-radius: 1px;
    background-color: #d4d4d4;
}
.watermark {
    position: absolute;
    top: -1px;
    right: 20px;
    width: 92px;
    height: 44px;
    opacity: 0.75;
    pointer-events: none;
}
.mark {
    fill: #fff;
    stroke: #cfcfcf;
    stroke-width: 1;
}
.brand {
    font: bold 20px "Liberation Sans", sans-serif;
}
.cjk {
    font: bold 15px "Noto Sans CJK SC", sans-serif;
}
.du {
    fill: #b9b9b9;
    font: bold 12px "Liberation Sans", sans-serif;
}
.url {
    fill: #fff;
    stroke: #c4c4c4;
    stroke-width: 1;
    paint-order: stroke;
    font: 11px "Liberation Sans", sans-serif;
}

.statusbar {
    display: flex;
    align-items: flex-end;
    justify-content: flex-end;
    height: 14px;
    background-color: #f0eded;
}
.statusbar svg {
    width: 8px;
    height: 8px;
}
```
